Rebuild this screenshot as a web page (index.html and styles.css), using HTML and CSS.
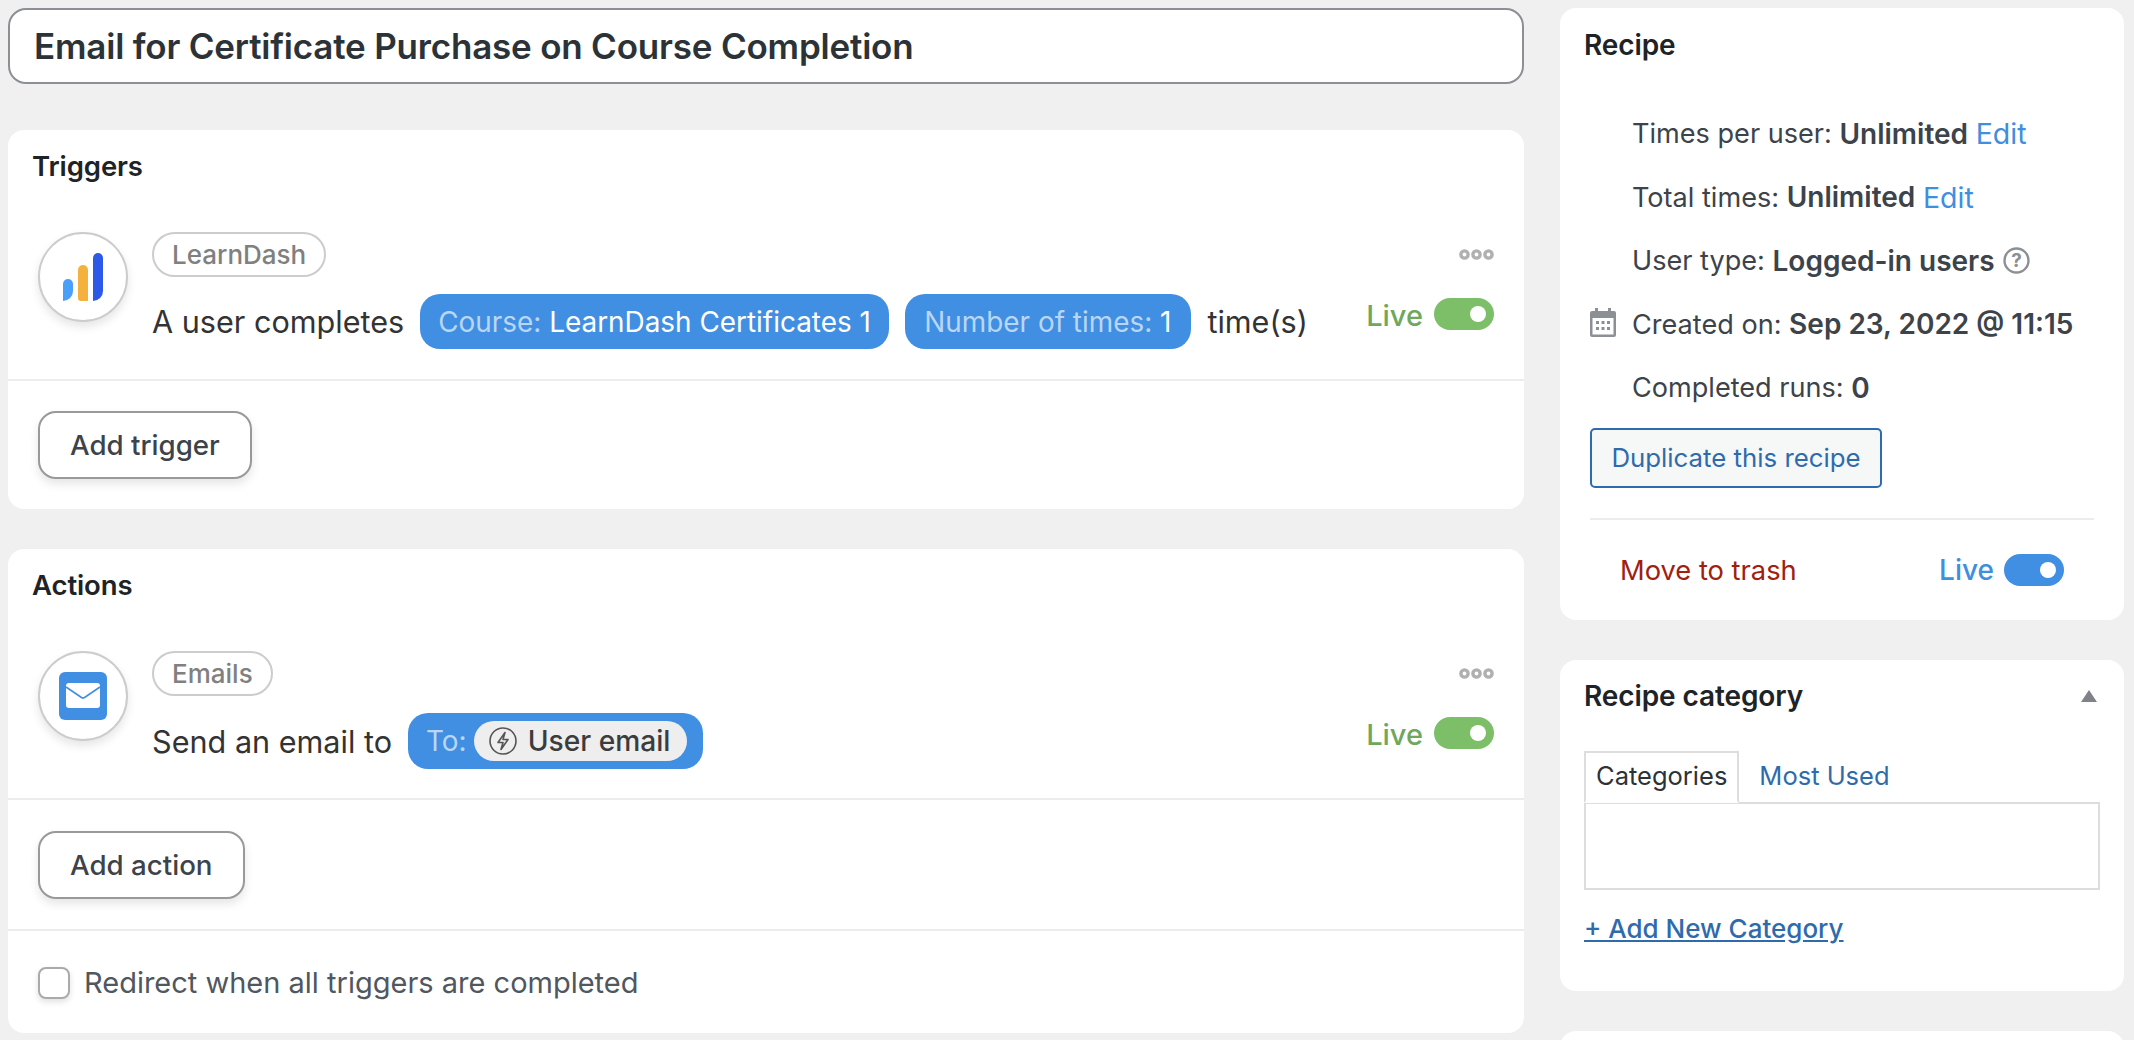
FILE: index.html
```html
<!DOCTYPE html>
<html lang="en">
<head>
<meta charset="utf-8">
<title>Recipe</title>
<link rel="stylesheet" href="styles.css">
</head>
<body>
<div class="page">
  <main class="main">
    <div class="title-box">Email for Certificate Purchase on Course Completion</div>

    <section class="card triggers">
      <h2 class="card-title">Triggers</h2>
      <div class="item">
        <div class="icon-circle">
          <svg class="ld-logo" viewBox="0 0 40 48" width="40" height="48">
            <path d="M0 31a5 5 0 0 1 10 0v7a10 10 0 0 1-10 10z" fill="#4a9ffb"/>
            <path d="M15 17a5 5 0 0 1 10 0v31h-7a3 3 0 0 1-3-3z" fill="#f5b13d"/>
            <path d="M30 5a5 5 0 0 1 10 0v33a10 10 0 0 1-10 10z" fill="#2e59e8"/>
          </svg>
        </div>
        <div class="item-body">
          <span class="tag">LearnDash</span>
          <div class="sentence">
            <span class="sentence-text">A user completes</span>
            <span class="token token-course"><span class="token-key">Course:&nbsp;</span>LearnDash Certificates 1</span>
            <span class="token token-count"><span class="token-key">Number of times:&nbsp;</span>1</span>
            <span class="sentence-text">time(s)</span>
          </div>
        </div>
        <div class="item-side">
          <svg class="dots" viewBox="0 0 35 11" width="35" height="11"><g fill="none" stroke="#b0b0b0" stroke-width="3.4"><circle cx="5.5" cy="5.5" r="3.6"/><circle cx="17.5" cy="5.5" r="3.6"/><circle cx="29.5" cy="5.5" r="3.6"/></g></svg>
          <div class="status status-green"><span class="status-label">Live</span><span class="toggle"></span></div>
        </div>
      </div>
      <div class="foot"><button class="add-btn">Add trigger</button></div>
    </section>

    <section class="card actions">
      <h2 class="card-title">Actions</h2>
      <div class="item">
        <div class="icon-circle">
          <svg viewBox="0 0 48 48" width="48" height="48">
            <rect width="48" height="48" rx="6" fill="#418fe2"/>
            <rect x="7" y="11" width="34" height="25" rx="3" fill="#fff"/>
            <path d="M7 15l15.5 10.5a3 3 0 0 0 3 0L41 15" fill="none" stroke="#418fe2" stroke-width="1.6"/>
          </svg>
        </div>
        <div class="item-body">
          <span class="tag">Emails</span>
          <div class="sentence">
            <span class="sentence-text">Send an email to</span>
            <span class="token token-to"><span class="token-key">To:</span><span class="token-inner"><svg viewBox="0 0 28 28" width="28" height="28"><circle cx="14" cy="14" r="13" fill="none" stroke="#555" stroke-width="1.6"/><path d="M16 5.5L9 15.5h5l-2 7 7-10h-5z" fill="none" stroke="#555" stroke-width="1.6" stroke-linejoin="round"/></svg><span>User email</span></span></span>
          </div>
        </div>
        <div class="item-side">
          <svg class="dots" viewBox="0 0 35 11" width="35" height="11"><g fill="none" stroke="#b0b0b0" stroke-width="3.4"><circle cx="5.5" cy="5.5" r="3.6"/><circle cx="17.5" cy="5.5" r="3.6"/><circle cx="29.5" cy="5.5" r="3.6"/></g></svg>
          <div class="status status-green"><span class="status-label">Live</span><span class="toggle"></span></div>
        </div>
      </div>
      <div class="foot"><button class="add-btn">Add action</button></div>
      <label class="redirect"><span class="checkbox"></span>Redirect when all triggers are completed</label>
    </section>
  </main>

  <aside class="side">
    <section class="card recipe">
      <h2 class="card-title side-title">Recipe</h2>
      <ul class="meta">
        <li class="meta-row">Times per user:&nbsp;<b>Unlimited</b>&nbsp;<a class="edit">Edit</a></li>
        <li class="meta-row">Total times:&nbsp;<b>Unlimited</b>&nbsp;<a class="edit">Edit</a></li>
        <li class="meta-row">User type:&nbsp;<b>Logged-in users</b>
          <svg class="help" viewBox="0 0 27 27" width="27" height="27"><circle cx="13.5" cy="13.5" r="12" fill="none" stroke="#8c8f94" stroke-width="2.4"/><text x="13.5" y="20" text-anchor="middle" class="help-mark">?</text></svg>
        </li>
        <li class="meta-row">
          <svg class="cal" viewBox="0 0 26 29" width="26" height="29"><path d="M2 3h22a2 2 0 0 1 2 2v22a2 2 0 0 1-2 2H2a2 2 0 0 1-2-2V5a2 2 0 0 1 2-2z" fill="#8c8f94"/><rect x="5" y="0" width="3" height="5" fill="#8c8f94"/><rect x="18" y="0" width="3" height="5" fill="#8c8f94"/><rect x="2.5" y="10" width="21" height="16.5" fill="#fff"/><g fill="#8c8f94"><rect x="6" y="13" width="3" height="3"/><rect x="11.5" y="13" width="3" height="3"/><rect x="17" y="13" width="3" height="3"/><rect x="6" y="19" width="3" height="3"/><rect x="11.5" y="19" width="3" height="3"/><rect x="17" y="19" width="3" height="3"/></g></svg>
          Created on:&nbsp;<b>Sep 23, 2022 @ 11:15</b></li>
        <li class="meta-row">Completed runs:&nbsp;<b>0</b></li>
      </ul>
      <button class="dup-btn">Duplicate this recipe</button>
      <div class="recipe-foot">
        <a class="trash">Move to trash</a>
        <div class="status status-blue"><span class="status-label">Live</span><span class="toggle"></span></div>
      </div>
    </section>

    <section class="card category">
      <div class="cat-head">
        <h2 class="card-title side-title cat-title">Recipe category</h2>
        <span class="triangle"></span>
      </div>
      <div class="tabs">
        <span class="tab tab-active">Categories</span>
        <a class="tab">Most Used</a>
      </div>
      <div class="tab-panel"></div>
      <a class="add-cat">+ Add New Category</a>
    </section>
  </aside>
</div>
<div class="stub-wrap"></div>
</body>
</html>
```

FILE: styles.css
```css
* { box-sizing: border-box; }
html, body { margin: 0; height: 1040px; overflow: hidden; background: #f0f0f0; }
body { font-family: Inter, "Liberation Sans", sans-serif; color: #3c434a; position: relative; }

.page { display: grid; grid-template-columns: 1516px 564px; column-gap: 36px; padding: 8px 10px 0 8px; align-items: start; }
.main { display: flex; flex-direction: column; }
.side { display: flex; flex-direction: column; gap: 40px; }

.title-box { height: 76px; border: 2px solid #8c8f94; border-radius: 18px; background: #fff; padding-left: 24px; display: flex; align-items: center; font-size: 35px; font-weight: 600; letter-spacing: -0.2px; color: #2c3338; margin-bottom: 46px; }

.card { background: #fff; border-radius: 16px; }
.triggers { height: 379px; margin-bottom: 40px; }
.actions { height: 484px; }

.card-title { margin: 0; font-size: 27.5px; line-height: 32px; font-weight: 600; color: #1d2327; padding: 20px 0 0 24px; letter-spacing: -0.1px; }

.item { display: flex; padding: 50px 30px 0 30px; border-bottom: 2px solid #ececec; height: 199px; }
.icon-circle { width: 90px; height: 90px; flex: none; border: 2px solid #ccc; border-radius: 50%; background: #fff; box-shadow: 0 5px 10px rgba(0,0,0,.1); display: flex; align-items: center; justify-content: center; }
.item-body { margin-left: 24px; flex: 1; display: flex; flex-direction: column; align-items: flex-start; gap: 17px; }
.tag { height: 45px; padding: 0 18px; display: flex; align-items: center; border: 2px solid #ccc; border-radius: 23px; font-size: 26px; font-weight: 500; color: #808080; }
.sentence { display: flex; align-items: center; gap: 16px; color: #333; }
.sentence-text { white-space: nowrap; font-size: 30.6px; }
.token { height: 55px; padding: 0 18px; display: flex; align-items: center; white-space: nowrap; background: #418fe2; border-radius: 20px; color: #fff; font-size: 27.9px; }
.token-key { color: #b9d6f5; }
.token-course { padding: 0 18.5px 0 18px; }
.token-count { padding: 0 20px 0 19px; }
.token-to { padding: 0 16px 0 18px; height: 56px; }
.token-inner { display: flex; align-items: center; gap: 11px; height: 40px; padding: 0 17px 0 15px; margin-left: 7px; background: #eee; border-radius: 20px; color: #3c3c3c; font-size: 28.2px; font-weight: 500; }

.item-side { flex: none; display: flex; flex-direction: column; align-items: flex-end; padding-top: 17px; gap: 38px; }
.status { display: flex; align-items: center; gap: 11px; }
.status-label { font-size: 29px; font-weight: 500; line-height: 32px; }
.status-green .status-label { color: #6fa85d; margin-bottom: -3px; }
.status-blue { gap: 10px; }
.status-blue .status-label { color: #3f8ee0; font-size: 28px; }
.toggle { width: 60px; height: 32px; border-radius: 16px; position: relative; }
.status-green .toggle { background: #7dbf69; }
.status-blue .toggle { background: #418fe2; }
.toggle::after { content: ""; position: absolute; right: 8px; top: 8px; width: 16px; height: 16px; border-radius: 50%; background: #fff; }

.foot { padding: 30px 30px; }
.add-btn { display: block; height: 68px; padding: 0 30px; border: 2px solid #999; border-radius: 18px; background: #fff; font: 500 27.7px Inter, sans-serif; color: #3c434a; box-shadow: 0 5px 10px rgba(0,0,0,.1); }
.actions .foot { border-bottom: 2px solid #ececec; padding: 31px 30px 30px; }
.redirect { display: flex; align-items: center; gap: 14px; padding: 34px 0 0 30px; font-size: 29px; color: #50575e; }
.checkbox { width: 32px; height: 32px; border: 2px solid #aaa; border-radius: 8px; background: #fff; box-shadow: 0 3px 6px rgba(0,0,0,.12); }

.recipe { height: 612px; }
.side-title { padding: 21px 0 0 24px; font-size: 28px; }
.cat-title { padding-top: 20px; }
.meta { list-style: none; margin: 41px 0 0; padding: 0 0 0 72px; }
.meta-row { height: 63.5px; display: flex; align-items: center; font-size: 27.1px; color: #3c434a; white-space: nowrap; position: relative; }
.meta-row b { font-weight: 600; font-size: 28px; }
.edit { color: #3f8ee0; font-size: 28.5px; }
.help { margin-left: 8px; }
.help-mark { font: 700 19px Inter, sans-serif; fill: #8c8f94; }
.cal { position: absolute; left: -42px; top: 15px; }
.dup-btn { display: block; height: 60px; width: 292px; margin: 8px 0 0 30px; border: 2px solid #2e6bad; border-radius: 5px; background: #f6f7f7; font: 400 25.8px Inter, sans-serif; color: #2e6bad; }
.recipe-foot { display: flex; justify-content: space-between; align-items: center; margin: 30px 30px 0; padding: 34px 30px 0; border-top: 2px solid #ececec; }
.trash { color: #a0200f; font-size: 27.3px; }

.category { height: 331px; }
.cat-head { display: flex; justify-content: space-between; align-items: center; padding-right: 27px; }
.triangle { width: 0; height: 0; margin-top: 20px; border-left: 8px solid transparent; border-right: 8px solid transparent; border-bottom: 12px solid #7f8388; }
.tabs { display: flex; margin: 39px 0 0 24px; height: 51px; }
.tab { font-size: 25.5px; line-height: 46px; padding: 0 10px; color: #2e6bad; border: 2px solid transparent; }
.tab-active { color: #2c3338; border-color: #ddd; border-bottom-color: #fff; position: relative; z-index: 1; height: 52px; }
.tabs .tab + .tab { margin-left: 8px; }
.tab-panel { height: 88px; margin: 0 24px; border: 2px solid #ddd; }
.add-cat { display: inline-block; margin: 23px 0 0 24px; font-size: 26px; font-weight: 500; color: #2e6bad; text-decoration: underline; }
.stub-wrap { position: absolute; left: 1560px; top: 1031px; width: 564px; height: 60px; background: #fff; border-radius: 16px; }
```
